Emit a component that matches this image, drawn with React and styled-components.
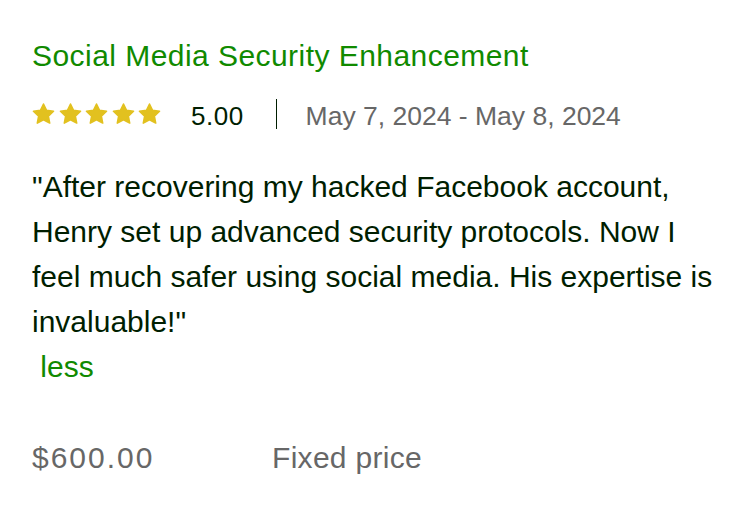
import React from 'react';
import styled, {createGlobalStyle} from 'styled-components';

const GlobalStyle = createGlobalStyle`
  html, body {
    margin: 0;
    padding: 0;
    background: #fff;
  }
  body {
    font-family: "Liberation Sans", Arial, sans-serif;
    color: #001e00;
  }
`

const review = {
  title: 'Social Media Security Enhancement',
  rating: 5,
  dates: 'May 7, 2024 - May 8, 2024',
  text: '"After recovering my hacked Facebook account, Henry set up advanced security protocols. Now I feel much safer using social media. His expertise is invaluable!"',
  price: '$600.00',
  kind: 'Fixed price',
}

const Star = ({color}) => (
  <svg width="23" height="22" viewBox="0 0 24 23" aria-hidden="true">
    <path
      d="M12 1l3.2 6.7 7.3.9-5.4 5.1 1.4 7.3L12 17.5l-6.5 3.5 1.4-7.3-5.4-5.1 7.3-.9z"
      fill={color}
      stroke={color}
      strokeWidth="1.6"
      strokeLinejoin="round"
    />
  </svg>
)

const App = () => {
  return (
    <>
      <GlobalStyle />
      <Card>
        <Title>{review.title}</Title>
        <MetaRow>
          <Stars>
            {Array.from({length: 5}).map((_, i) => (
              <Star key={i} color={i < review.rating ? '#e2c11f' : '#d5d5d5'} />
            ))}
          </Stars>
          <Score>{review.rating.toFixed(2)}</Score>
          <Divider />
          <Dates>{review.dates}</Dates>
        </MetaRow>
        <Quote>
          {review.text}
          <br />
          <LessLink href="#"> less</LessLink>
        </Quote>
        <PriceRow>
          <Price>{review.price}</Price>
          <Kind>{review.kind}</Kind>
        </PriceRow>
      </Card>
    </>
  )
}

export default App

const Card = styled.div`
  padding: 30px 24px 0 32px;
`

const Title = styled.h3`
  margin: 0;
  font-size: 30px;
  line-height: 52px;
  font-weight: 400;
  letter-spacing: 0.45px;
  color: #108a00;
`

const MetaRow = styled.div`
  display: flex;
  align-items: center;
  height: 40px;
  margin-top: 14px;
`

const Stars = styled.div`
  display: flex;
  gap: 3.5px;
  margin-top: -5px;
`

const Score = styled.span`
  margin-left: 30px;
  font-size: 26px;
  line-height: 40px;
  letter-spacing: 0.5px;
  color: #001e00;
`

const Divider = styled.span`
  width: 1px;
  height: 30px;
  margin: -4px 29px 0 32px;
  background: #001e00;
`

const Dates = styled.span`
  font-size: 26.5px;
  line-height: 40px;
  color: #676767;
`

const Quote = styled.p`
  margin: 28px 0 0;
  font-size: 30px;
  line-height: 45px;
  color: #001e00;
`

const LessLink = styled.a`
  color: #108a00;
  text-decoration: none;
  white-space: pre;
`

const PriceRow = styled.div`
  display: grid;
  grid-template-columns: 240px auto;
  margin-top: 46px;
  font-size: 30px;
  line-height: 45px;
  color: #676767;
`

const Price = styled.span`
  letter-spacing: 2px;
`

const Kind = styled.span`
  letter-spacing: 0.3px;
`
